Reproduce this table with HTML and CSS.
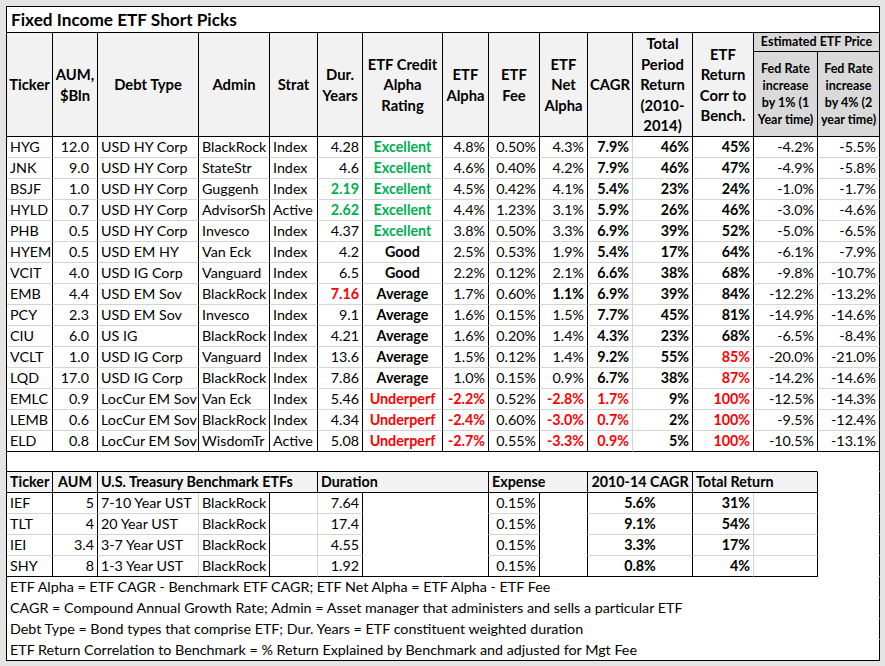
FILE: index.html
```html
<!DOCTYPE html>
<html>
<head>
<meta charset="utf-8">
<link rel="stylesheet" href="styles.css">
</head>
<body>
<table class="sheet">
<colgroup>
<col style="width:46px"><col style="width:45px"><col style="width:101px"><col style="width:71px"><col style="width:48px"><col style="width:45px"><col style="width:80px"><col style="width:46px"><col style="width:51px"><col style="width:48px"><col style="width:45px"><col style="width:60px"><col style="width:61px"><col style="width:64px"><col style="width:62px">
</colgroup>
<tr class="t"><td colspan="15" class="title">Fixed Income ETF Short Picks</td></tr>
<tr class="ha">
<td rowspan="2" class="h">Ticker</td>
<td rowspan="2" class="h">AUM,<br>$Bln</td>
<td rowspan="2" class="h">Debt Type</td>
<td rowspan="2" class="h">Admin</td>
<td rowspan="2" class="h">Strat</td>
<td rowspan="2" class="h">Dur.<br>Years</td>
<td rowspan="2" class="h">ETF Credit<br>Alpha<br>Rating</td>
<td rowspan="2" class="h">ETF<br>Alpha</td>
<td rowspan="2" class="h">ETF<br>Fee</td>
<td rowspan="2" class="h">ETF<br>Net<br>Alpha</td>
<td rowspan="2" class="h">CAGR</td>
<td rowspan="2" class="h">Total<br>Period<br>Return<br>(2010-<br>2014)</td>
<td rowspan="2" class="h">ETF<br>Return<br>Corr to<br>Bench.</td>
<td colspan="2" class="h est">Estimated ETF Price</td>
</tr>
<tr class="hb">
<td class="h fed">Fed Rate<br>increase<br>by 1% (1<br>Year time)</td>
<td class="h fed">Fed Rate<br>increase<br>by 4% (2<br>year time)</td>
</tr>

<tr class="d"><td>HYG</td><td class="r aum">12.0</td><td>USD HY Corp</td><td>BlackRock</td><td>Index</td><td class="r">4.28</td><td class="c b g">Excellent</td><td class="r">4.8%</td><td class="r">0.50%</td><td class="r">4.3%</td><td class="r b gr">7.9%</td><td class="r b">46%</td><td class="r b">45%</td><td class="r">-4.2%</td><td class="r">-5.5%</td></tr>
<tr class="d"><td>JNK</td><td class="r aum">9.0</td><td>USD HY Corp</td><td>StateStr</td><td>Index</td><td class="r">4.6</td><td class="c b g">Excellent</td><td class="r">4.6%</td><td class="r">0.40%</td><td class="r">4.2%</td><td class="r b gr">7.9%</td><td class="r b">46%</td><td class="r b">47%</td><td class="r">-4.9%</td><td class="r">-5.8%</td></tr>
<tr class="d"><td>BSJF</td><td class="r aum">1.0</td><td>USD HY Corp</td><td>Guggenh</td><td>Index</td><td class="r b g">2.19</td><td class="c b g">Excellent</td><td class="r">4.5%</td><td class="r">0.42%</td><td class="r">4.1%</td><td class="r b gr">5.4%</td><td class="r b">23%</td><td class="r b">24%</td><td class="r">-1.0%</td><td class="r">-1.7%</td></tr>
<tr class="d"><td>HYLD</td><td class="r aum">0.7</td><td>USD HY Corp</td><td>AdvisorSh</td><td>Active</td><td class="r b g">2.62</td><td class="c b g">Excellent</td><td class="r">4.4%</td><td class="r">1.23%</td><td class="r">3.1%</td><td class="r b gr">5.9%</td><td class="r b">26%</td><td class="r b">46%</td><td class="r">-3.0%</td><td class="r">-4.6%</td></tr>
<tr class="d"><td>PHB</td><td class="r aum">0.5</td><td>USD HY Corp</td><td>Invesco</td><td>Index</td><td class="r">4.37</td><td class="c b g">Excellent</td><td class="r">3.8%</td><td class="r">0.50%</td><td class="r">3.3%</td><td class="r b gr">6.9%</td><td class="r b">39%</td><td class="r b">52%</td><td class="r">-5.0%</td><td class="r">-6.5%</td></tr>
<tr class="d"><td>HYEM</td><td class="r aum">0.5</td><td>USD EM HY</td><td>Van Eck</td><td>Index</td><td class="r">4.2</td><td class="c b">Good</td><td class="r">2.5%</td><td class="r">0.53%</td><td class="r">1.9%</td><td class="r b gr">5.4%</td><td class="r b">17%</td><td class="r b">64%</td><td class="r">-6.1%</td><td class="r">-7.9%</td></tr>
<tr class="d"><td>VCIT</td><td class="r aum">4.0</td><td>USD IG Corp</td><td>Vanguard</td><td>Index</td><td class="r">6.5</td><td class="c b">Good</td><td class="r">2.2%</td><td class="r">0.12%</td><td class="r">2.1%</td><td class="r b gr">6.6%</td><td class="r b">38%</td><td class="r b">68%</td><td class="r">-9.8%</td><td class="r">-10.7%</td></tr>
<tr class="d"><td>EMB</td><td class="r aum">4.4</td><td>USD EM Sov</td><td>BlackRock</td><td>Index</td><td class="r b rd">7.16</td><td class="c b">Average</td><td class="r">1.7%</td><td class="r">0.60%</td><td class="r b">1.1%</td><td class="r b gr">6.9%</td><td class="r b">39%</td><td class="r b">84%</td><td class="r">-12.2%</td><td class="r">-13.2%</td></tr>
<tr class="d"><td>PCY</td><td class="r aum">2.3</td><td>USD EM Sov</td><td>Invesco</td><td>Index</td><td class="r">9.1</td><td class="c b">Average</td><td class="r">1.6%</td><td class="r">0.15%</td><td class="r">1.5%</td><td class="r b gr">7.7%</td><td class="r b">45%</td><td class="r b">81%</td><td class="r">-14.9%</td><td class="r">-14.6%</td></tr>
<tr class="d"><td>CIU</td><td class="r aum">6.0</td><td>US IG</td><td>BlackRock</td><td>Index</td><td class="r">4.21</td><td class="c b">Average</td><td class="r">1.6%</td><td class="r">0.20%</td><td class="r">1.4%</td><td class="r b gr">4.3%</td><td class="r b">23%</td><td class="r b">68%</td><td class="r">-6.5%</td><td class="r">-8.4%</td></tr>
<tr class="d"><td>VCLT</td><td class="r aum">1.0</td><td>USD IG Corp</td><td>Vanguard</td><td>Index</td><td class="r">13.6</td><td class="c b">Average</td><td class="r">1.5%</td><td class="r">0.12%</td><td class="r">1.4%</td><td class="r b gr">9.2%</td><td class="r b">55%</td><td class="r b rd">85%</td><td class="r">-20.0%</td><td class="r">-21.0%</td></tr>
<tr class="d"><td>LQD</td><td class="r aum">17.0</td><td>USD IG Corp</td><td>BlackRock</td><td>Index</td><td class="r">7.86</td><td class="c b">Average</td><td class="r">1.0%</td><td class="r">0.15%</td><td class="r">0.9%</td><td class="r b gr">6.7%</td><td class="r b">38%</td><td class="r b rd">87%</td><td class="r">-14.2%</td><td class="r">-14.6%</td></tr>
<tr class="d"><td>EMLC</td><td class="r aum">0.9</td><td>LocCur EM Sov</td><td>Van Eck</td><td>Index</td><td class="r">5.46</td><td class="c b rd">Underperf</td><td class="r b rd">-2.2%</td><td class="r">0.52%</td><td class="r b rd">-2.8%</td><td class="r b rd gr">1.7%</td><td class="r b">9%</td><td class="r b rd">100%</td><td class="r">-12.5%</td><td class="r">-14.3%</td></tr>
<tr class="d"><td>LEMB</td><td class="r aum">0.6</td><td>LocCur EM Sov</td><td>BlackRock</td><td>Index</td><td class="r">4.34</td><td class="c b rd">Underperf</td><td class="r b rd">-2.4%</td><td class="r">0.60%</td><td class="r b rd">-3.0%</td><td class="r b rd gr">0.7%</td><td class="r b">2%</td><td class="r b rd">100%</td><td class="r">-9.5%</td><td class="r">-12.4%</td></tr>
<tr class="d last"><td>ELD</td><td class="r aum">0.8</td><td>LocCur EM Sov</td><td>WisdomTr</td><td>Active</td><td class="r">5.08</td><td class="c b rd">Underperf</td><td class="r b rd">-2.7%</td><td class="r">0.55%</td><td class="r b rd">-3.3%</td><td class="r b rd gr">0.9%</td><td class="r b">5%</td><td class="r b rd">100%</td><td class="r">-10.5%</td><td class="r">-13.1%</td></tr>

<tr class="gap"><td colspan="14" class="nr kb"></td><td class="nb"></td></tr>

<tr class="lh">
<td class="lhc">Ticker</td>
<td class="lhc c">AUM</td>
<td colspan="3" class="lhc">U.S. Treasury Benchmark ETFs</td>
<td colspan="3" class="lhc">Duration</td>
<td colspan="2" class="lhc">Expense</td>
<td colspan="2" class="lhc c">2010-14 CAGR</td>
<td colspan="2" class="lhc">Total Return</td>
<td class="nb"></td>
</tr>
<tr class="d"><td>IEF</td><td class="r">5</td><td class="gr">7-10 Year UST</td><td>BlackRock</td><td class="gr"></td><td class="r">7.64</td><td class="nr nb"></td><td class="nb"></td><td class="r">0.15%</td><td class="nb"></td><td colspan="2" class="c b">5.6%</td><td class="r b gr">31%</td><td></td><td class="nb"></td></tr>
<tr class="d"><td>TLT</td><td class="r">4</td><td class="gr">20 Year UST</td><td>BlackRock</td><td class="gr"></td><td class="r">17.4</td><td class="nr nb"></td><td class="nb"></td><td class="r">0.15%</td><td class="nb"></td><td colspan="2" class="c b">9.1%</td><td class="r b gr">54%</td><td></td><td class="nb"></td></tr>
<tr class="d"><td>IEI</td><td class="r">3.4</td><td class="gr">3-7 Year UST</td><td>BlackRock</td><td class="gr"></td><td class="r">4.55</td><td class="nr nb"></td><td class="nb"></td><td class="r">0.15%</td><td class="nb"></td><td colspan="2" class="c b">3.3%</td><td class="r b gr">17%</td><td></td><td class="nb"></td></tr>
<tr class="d"><td class="kb">SHY</td><td class="r kb">8</td><td class="gr kb">1-3 Year UST</td><td class="kb">BlackRock</td><td class="gr kb"></td><td class="r kb">1.92</td><td class="nr kb"></td><td class="kb"></td><td class="r kb">0.15%</td><td class="kb"></td><td colspan="2" class="c b kb">0.8%</td><td class="r b gr kb">4%</td><td class="kb"></td><td class="nb"></td></tr>

<tr class="d"><td colspan="15" class="fn nb">ETF Alpha = ETF CAGR - Benchmark ETF CAGR; ETF Net Alpha = ETF Alpha - ETF Fee</td></tr>
<tr class="d"><td colspan="15" class="fn nb">CAGR = Compound Annual Growth Rate; Admin = Asset manager that administers and sells a particular ETF</td></tr>
<tr class="d"><td colspan="15" class="fn nb">Debt Type = Bond types that comprise ETF; Dur. Years = ETF constituent weighted duration</td></tr>
<tr class="d"><td colspan="15" class="fn kb">ETF Return Correlation to Benchmark = % Return Explained by Benchmark and adjusted for Mgt Fee</td></tr>
</table>
</body>
</html>
```

FILE: styles.css
```css
html, body {
  margin: 0;
  padding: 0;
  background: #e4e4e4;
}
body {
  padding: 6px 0 0 6px;
}
.sheet {
  border-collapse: separate;
  border-spacing: 0;
  table-layout: fixed;
  width: 874px;
  background: #ffffff;
  border-left: 1px solid #000;
  border-top: 1px solid #000;
  font-family: Lato, "Liberation Sans", sans-serif;
  font-size: 14.3px;
  color: #000;
}
.sheet td {
  padding: 0 3px;
  border-right: 1px solid #000;
  border-bottom: 1px solid #d4d4d4;
  white-space: nowrap;
  overflow: hidden;
  vertical-align: middle;
  line-height: 20px;
  height: 20px;
}
.sheet tr.d td { height: 20px; }
.sheet tr.t td { height: 25px; }
.sheet tr.ha td { height: 18px; }
.sheet tr.hb td { height: 84px; }
.sheet tr.gap td { height: 19px; }
.sheet tr.lh td { height: 20px; }

.title {
  font-weight: 700;
  font-size: 17.2px;
  border-bottom: 1px solid #000 !important;
  padding-left: 4px !important;
}
.h {
  background: #f2f2f2;
  font-weight: 700;
  font-size: 14.8px;
  text-align: center;
  border-bottom: 1px solid #000 !important;
  line-height: 20.5px !important;
  padding: 0 1px !important;
}
.est {
  background: #d9d9d9;
  font-size: 12.5px;
  line-height: 18px !important;
}
.fed {
  background: #d9d9d9;
  font-size: 12.5px;
  line-height: 17px !important;
}
.lhc {
  background: #f2f2f2;
  font-weight: 700;
  border-bottom: 1px solid #000 !important;
}
.r { text-align: right; }
.c { text-align: center; }
.b { font-weight: 700; }
.g { color: #00b050; }
.rd { color: #ff0000; }
.aum { padding-right: 8px !important; }
.sheet td.gr { border-right-color: #d4d4d4; }
.sheet td.nr { border-right-color: transparent; }
.sheet td.nb { border-bottom-color: transparent; }
.sheet td.kb { border-bottom-color: #000; }
.sheet tr.last td { border-bottom-color: #000; }
.fn { padding-left: 3px; }
```
